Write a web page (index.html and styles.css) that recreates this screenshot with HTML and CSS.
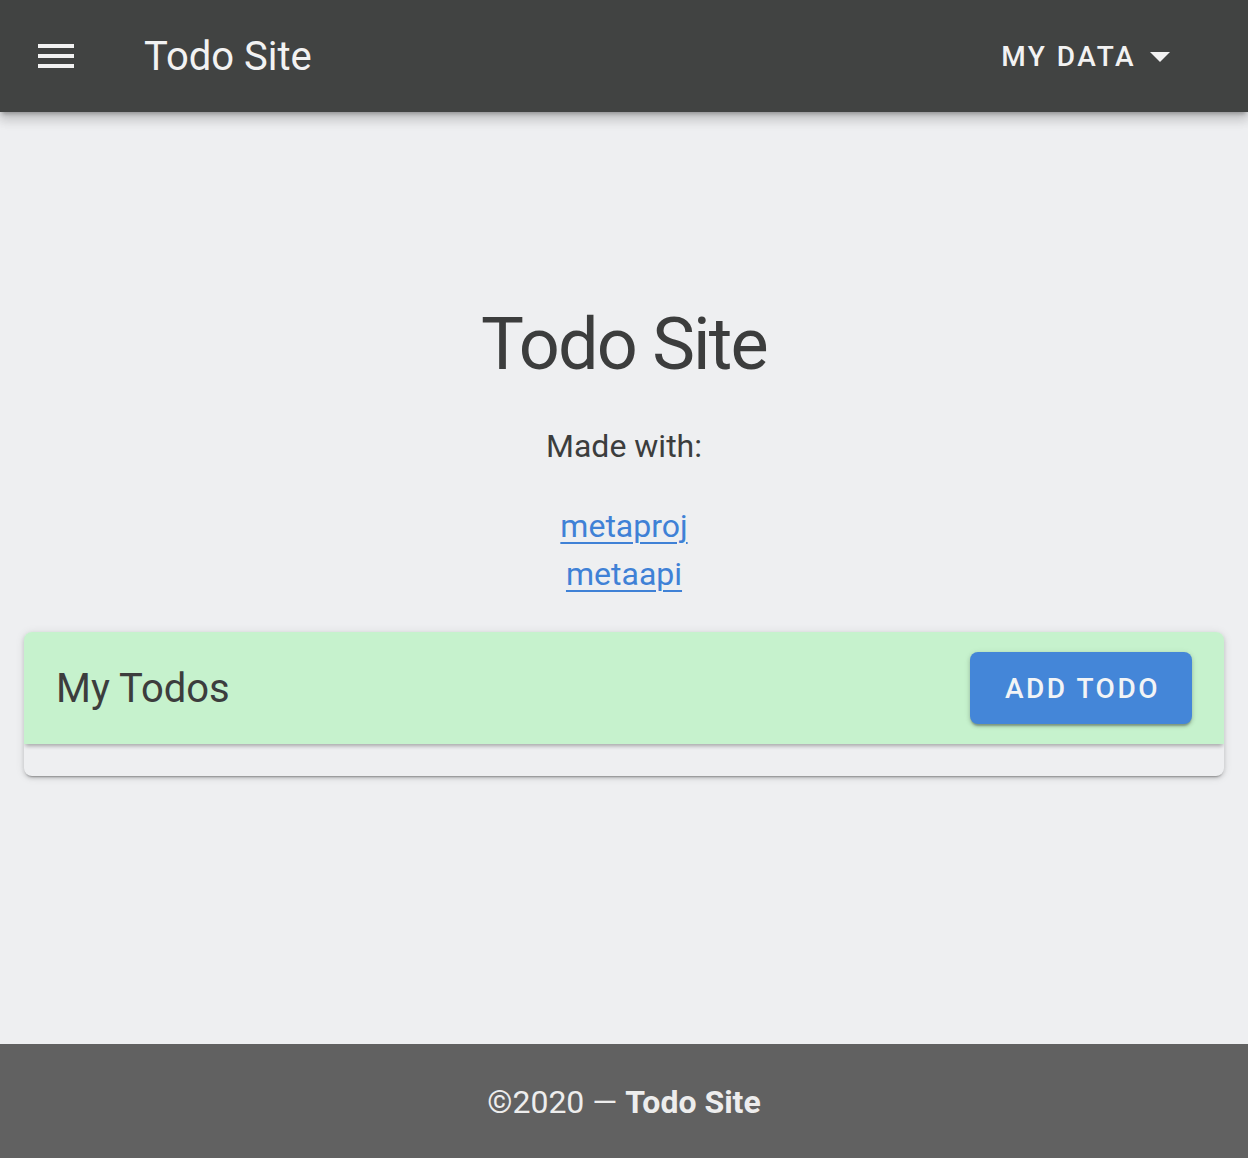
FILE: index.html
```html
<!DOCTYPE html>
<html lang="en">
<head>
<meta charset="utf-8">
<title>Todo Site</title>
<link rel="stylesheet" href="styles.css">
</head>
<body>
<div class="app">
  <header class="appbar">
    <button class="nav-btn" aria-label="Menu">
      <svg class="icon" viewBox="0 0 24 24" width="48" height="48"><path fill="currentColor" d="M3 18h18v-2H3v2zm0-5h18v-2H3v2zm0-7v2h18V6H3z"/></svg>
    </button>
    <div class="appbar-title">Todo Site</div>
    <div class="spacer"></div>
    <button class="menu-btn">
      <span class="menu-label">MY DATA</span>
      <svg class="icon" viewBox="0 0 24 24" width="48" height="48"><path fill="currentColor" d="M7 10l5 5 5-5z"/></svg>
    </button>
  </header>

  <main class="main">
    <h1 class="hero-title">Todo Site</h1>
    <p class="made-with">Made with:</p>
    <div class="links">
      <a class="link" href="#">metaproj</a>
      <a class="link" href="#">metaapi</a>
    </div>

    <section class="card">
      <div class="card-toolbar">
        <div class="card-title">My Todos</div>
        <button class="add-btn">ADD TODO</button>
      </div>
      <div class="card-body"></div>
    </section>
  </main>

  <footer class="footer">
    <span>©2020 — <strong>Todo Site</strong></span>
  </footer>
</div>
</body>
</html>
```

FILE: styles.css
```css
* { box-sizing: border-box; }

html, body {
  margin: 0;
  padding: 0;
}

body {
  font-family: Roboto, "Liberation Sans", sans-serif;
  background: #eeeff1;
  color: #3c3d3d;
}

.app {
  min-height: 100vh;
  display: flex;
  flex-direction: column;
}

.appbar {
  height: 112px;
  flex: 0 0 112px;
  background: #414342;
  color: #f2f2f2;
  display: flex;
  align-items: center;
  padding: 0 64px 0 8px;
  box-shadow: 0 4px 4px -2px rgba(0,0,0,0.25), 0 8px 10px 1px rgba(0,0,0,0.12), 0 3px 14px 2px rgba(0,0,0,0.08);
  position: relative;
  z-index: 2;
}

button {
  font-family: inherit;
  border: 0;
  background: none;
  color: inherit;
  cursor: pointer;
  padding: 0;
}

.icon {
  display: block;
}

.nav-btn {
  width: 96px;
  height: 96px;
  display: flex;
  align-items: center;
  justify-content: center;
}

.appbar-title {
  margin-left: 40px;
  font-size: 40px;
  font-weight: 400;
}

.spacer {
  flex: 1;
}

.menu-btn {
  display: flex;
  align-items: center;
  height: 72px;
}

.menu-label {
  font-size: 28px;
  font-weight: 500;
  letter-spacing: 2.5px;
}

.main {
  flex: 1;
  padding-top: 193px;
  text-align: center;
}

.hero-title {
  margin: 0;
  font-size: 72px;
  line-height: 80px;
  font-weight: 400;
  letter-spacing: -1.8px;
  color: #3c3d3d;
}

.made-with {
  margin: 37px 0 0;
  font-size: 32px;
  line-height: 48px;
}

.links {
  margin-top: 32px;
  display: flex;
  flex-direction: column;
  align-items: center;
}

.link {
  font-size: 32px;
  line-height: 48px;
  color: #3f81d6;
  text-decoration: underline;
  text-decoration-thickness: 2px;
  text-underline-offset: 5px;
}

.card {
  margin: 34px 24px 0;
  border-radius: 8px;
  background: #eeeff1;
  overflow: hidden;
  box-shadow: 0 3px 2px -2px rgba(0,0,0,0.3), 0 2px 4px 0 rgba(0,0,0,0.14), 0 1px 10px 0 rgba(0,0,0,0.1);
  text-align: left;
}

.card-toolbar {
  height: 112px;
  background: #c6f2cd;
  display: flex;
  align-items: center;
  justify-content: space-between;
  padding: 0 32px 0 32px;
  box-shadow: 0 4px 4px -2px rgba(0,0,0,0.22), 0 2px 4px 0 rgba(0,0,0,0.1);
  position: relative;
}

.card-title {
  font-size: 40px;
  font-weight: 400;
  color: #3c3d3d;
}

.add-btn {
  height: 72px;
  width: 222px;
  background: #4486d8;
  color: #f2f4f6;
  border-radius: 8px;
  font-size: 28px;
  font-weight: 500;
  letter-spacing: 2.5px;
  padding-left: 3px;
  box-shadow: 0 3px 2px -1px rgba(0,0,0,0.25), 0 2px 4px 0 rgba(0,0,0,0.14), 0 1px 6px 0 rgba(0,0,0,0.1);
}

.card-body {
  height: 32px;
}

.footer {
  height: 114px;
  flex: 0 0 114px;
  background: #616161;
  color: #ededed;
  display: flex;
  align-items: center;
  justify-content: center;
  font-size: 32px;
  padding-top: 2px;
}

.footer strong {
  font-weight: 700;
}
```
